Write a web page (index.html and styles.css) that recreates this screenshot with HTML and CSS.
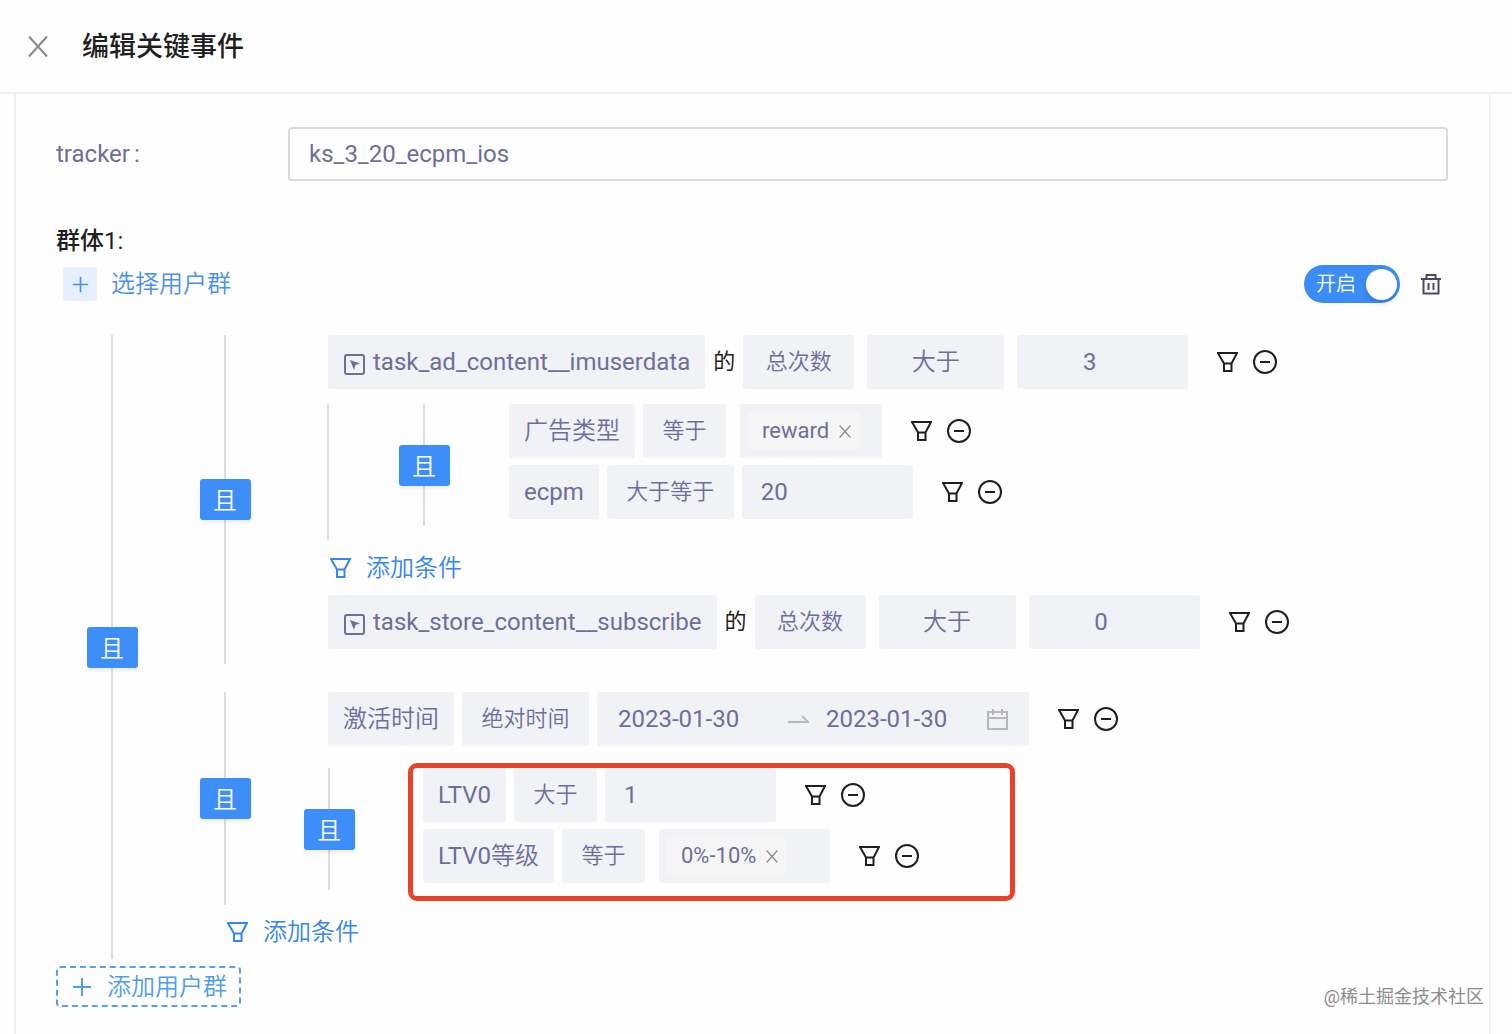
FILE: index.html
```html
<!DOCTYPE html>
<html lang="zh-CN">
<head>
<meta charset="utf-8">
<meta name="viewport" content="width=device-width, initial-scale=1">
<title>编辑关键事件</title>
<link rel="stylesheet" href="styles.css">
</head>
<body>
<svg class="sprite" aria-hidden="true">
  <symbol id="i-filter" viewBox="0 0 21 20"><path d="M1 1h19l-5.500 10.500v7.500h-7.500v-7.500zM7 11.500h7.500"/></symbol>
  <symbol id="i-minus" viewBox="0 0 24 24"><circle cx="12" cy="12" r="11"/><path d="M7 12h10"/></symbol>
  <symbol id="i-event" viewBox="0 0 21 21"><rect x="1" y="1" width="19" height="19" rx="2"/><path class="solid" d="M6 6l10 3.500-4.500 1.500-1.500 5z"/></symbol>
  <symbol id="i-close" viewBox="0 0 20 20"><path d="M1 0l18 20M19 0l-18 20"/></symbol>
  <symbol id="i-plus" viewBox="0 0 20 20"><path d="M10 1v18M1 10h18"/></symbol>
</svg>

<header class="header">
  <button class="icon-btn close" aria-label="关闭"><svg width="20" height="21"><use href="#i-close"/></svg></button>
  <h1 class="title">编辑关键事件</h1>
</header>

<main class="panel">
  <div class="field">
    <label class="field-label" for="tracker">tracker<span class="colon">:</span></label>
    <input class="field-input" id="tracker" type="text" value="ks_3_20_ecpm_ios">
  </div>

  <h2 class="group-title">群体<span class="group-index">1:</span></h2>
  <div class="group-bar">
    <button class="pick"><span class="pick-icon"><svg width="17" height="17"><use href="#i-plus"/></svg></span>选择用户群</button>
    <div class="group-tools">
      <label class="switch"><input type="checkbox" checked><span class="switch-text">开启</span><span class="knob"></span></label>
      <button class="icon-btn trash" aria-label="删除"><svg width="20" height="21" viewBox="0 0 20 21"><path d="M0 5h20M2.500 5v14.500h15v-14.500M5.500 5v-4h9v4M7.500 9v7M12.500 9v7"/></svg></button>
    </div>
  </div>

  <section class="tree">
    <div class="rail"><button class="and">且</button></div>
    <div class="branches">
      <div class="branch">
        <div class="rail"><button class="and">且</button></div>
        <div class="rules">
          <div class="rule">
            <button class="chip"><svg class="event" width="21" height="21"><use href="#i-event"/></svg>task_ad_content__imuserdata</button>
            <span class="of">的</span>
            <div class="measures">
              <select class="select metric" aria-label="指标"><option>总次数</option></select>
              <select class="select compare" aria-label="比较"><option>大于</option></select>
              <input class="number centered" aria-label="数值" value="3">
            </div>
            <div class="actions"><button class="icon-btn" aria-label="筛选"><svg width="21" height="20"><use href="#i-filter"/></svg></button><button class="icon-btn" aria-label="移除"><svg width="24" height="24"><use href="#i-minus"/></svg></button></div>
          </div>
          <div class="nested bordered">
            <div class="rail narrow"><button class="and">且</button></div>
            <div class="subrules">
              <div class="rule">
                <button class="chip cjk">广告类型</button>
                <select class="select" aria-label="比较"><option>等于</option></select>
                <div class="tags fit"><span class="tag">reward<button class="icon-btn remove" aria-label="移除 reward"><svg width="12" height="13"><use href="#i-close"/></svg></button></span></div>
                <div class="actions"><button class="icon-btn" aria-label="筛选"><svg width="21" height="20"><use href="#i-filter"/></svg></button><button class="icon-btn" aria-label="移除"><svg width="24" height="24"><use href="#i-minus"/></svg></button></div>
              </div>
              <div class="rule">
                <button class="chip">ecpm</button>
                <select class="select" aria-label="比较"><option>大于等于</option></select>
                <input class="number" aria-label="数值" value="20">
                <div class="actions"><button class="icon-btn" aria-label="筛选"><svg width="21" height="20"><use href="#i-filter"/></svg></button><button class="icon-btn" aria-label="移除"><svg width="24" height="24"><use href="#i-minus"/></svg></button></div>
              </div>
            </div>
          </div>
          <button class="add-rule inner"><svg width="21" height="20"><use href="#i-filter"/></svg>添加条件</button>
          <div class="rule">
            <button class="chip"><svg class="event" width="21" height="21"><use href="#i-event"/></svg>task_store_content__subscribe</button>
            <span class="of">的</span>
            <div class="measures">
              <select class="select metric" aria-label="指标"><option>总次数</option></select>
              <select class="select compare" aria-label="比较"><option>大于</option></select>
              <input class="number centered" aria-label="数值" value="0">
            </div>
            <div class="actions"><button class="icon-btn" aria-label="筛选"><svg width="21" height="20"><use href="#i-filter"/></svg></button><button class="icon-btn" aria-label="移除"><svg width="24" height="24"><use href="#i-minus"/></svg></button></div>
          </div>
        </div>
      </div>

      <div class="branch">
        <div class="rail"><button class="and">且</button></div>
        <div class="rules">
          <div class="rule">
            <button class="chip cjk">激活时间</button>
            <select class="select" aria-label="时间类型"><option>绝对时间</option></select>
            <div class="range">
              <input class="date" aria-label="开始日期" value="2023-01-30">
              <svg class="arrow" width="21" height="10" viewBox="0 0 21 10"><path d="M0 8h20l-6-6"/></svg>
              <input class="date" aria-label="结束日期" value="2023-01-30">
              <svg class="calendar" width="21" height="21" viewBox="0 0 21 21"><path d="M1 3h19v17h-19zM1 9h19M6 0v6M15 0v6"/></svg>
            </div>
            <div class="actions"><button class="icon-btn" aria-label="筛选"><svg width="21" height="20"><use href="#i-filter"/></svg></button><button class="icon-btn" aria-label="移除"><svg width="24" height="24"><use href="#i-minus"/></svg></button></div>
          </div>
          <div class="nested">
            <div class="rail narrow"><button class="and">且</button></div>
            <div class="subrules marked">
              <div class="rule">
                <button class="chip">LTV0</button>
                <select class="select" aria-label="比较"><option>大于</option></select>
                <input class="number" aria-label="数值" value="1">
                <div class="actions"><button class="icon-btn" aria-label="筛选"><svg width="21" height="20"><use href="#i-filter"/></svg></button><button class="icon-btn" aria-label="移除"><svg width="24" height="24"><use href="#i-minus"/></svg></button></div>
              </div>
              <div class="rule">
                <button class="chip">LTV0<span class="cjk">等级</span></button>
                <select class="select" aria-label="比较"><option>等于</option></select>
                <div class="tags"><span class="tag">0%-10%<button class="icon-btn remove" aria-label="移除 0%-10%"><svg width="12" height="13"><use href="#i-close"/></svg></button></span></div>
                <div class="actions"><button class="icon-btn" aria-label="筛选"><svg width="21" height="20"><use href="#i-filter"/></svg></button><button class="icon-btn" aria-label="移除"><svg width="24" height="24"><use href="#i-minus"/></svg></button></div>
              </div>
            </div>
          </div>
        </div>
      </div>
      <button class="add-rule outer"><svg width="21" height="20"><use href="#i-filter"/></svg>添加条件</button>
    </div>
  </section>

  <button class="add-group"><svg width="20" height="20"><use href="#i-plus"/></svg>添加用户群</button>
</main>
<div class="watermark">@稀土掘金技术社区</div>
</body>
</html>
```
FILE: styles.css
```css
*, *::after { box-sizing: border-box; }

body {
  margin: 0;
  min-height: 100vh;
  display: flex;
  flex-direction: column;
  position: relative;
  background: #fefefe;
  color: #1f1f1f;
  font: 24px/32px Roboto, "Noto Sans CJK SC", sans-serif;
}

button, input, select {
  margin: 0;
  padding: 0;
  border: 0;
  border-radius: 0;
  background: none;
  color: inherit;
  font: inherit;
  appearance: none;
}

svg {
  flex: none;
  display: block;
  fill: none;
  stroke: currentColor;
  stroke-width: 2;
}

.sprite { position: absolute; width: 0; height: 0; }
.solid { fill: currentColor; stroke: none; }
.icon-btn { display: flex; align-items: center; justify-content: center; }

.header {
  display: flex;
  align-items: center;
  gap: 34px;
  height: 94px;
  padding: 0 28px;
  border-bottom: 2px solid #f0f0f0;
}
.close { color: #888; }
.title { margin: 0; padding-top: 2px; font-size: 27px; font-weight: 500; line-height: 36px; }

.panel {
  flex: 1;
  margin: 0 21px 0 14px;
  padding: 33px 41px 27px 40px;
  border: solid #f0f0f0;
  border-width: 0 2px;
}

.field { display: flex; align-items: center; color: #6e6e9c; }
.field-label { width: 232px; }
.colon { margin-left: 4px; }
.field-input {
  flex: 1;
  min-width: 0;
  height: 54px;
  padding: 0 19px;
  border: 2px solid #dadadc;
  border-radius: 4px;
}

.group-title { margin: 44px 0 8px; font-size: 24px; font-weight: 500; }
.group-index { font-weight: 400; }
.group-bar { display: flex; align-items: center; justify-content: space-between; height: 38px; }
.pick { display: flex; align-items: center; gap: 14px; margin-left: 7px; color: #4a90f0; }
.pick-icon {
  display: grid;
  place-items: center;
  width: 34px;
  height: 34px;
  border-radius: 2px;
  background: #e6f0fd;
}
.group-tools { display: flex; align-items: center; gap: 21px; margin-right: 7px; }
.switch {
  display: flex;
  align-items: center;
  justify-content: space-between;
  width: 96px;
  height: 38px;
  padding: 0 3px 0 12px;
  border-radius: 19px;
  background: #3c8cf8;
  color: #fff;
  font-size: 20px;
}
.switch input { position: absolute; opacity: 0; }
.knob { width: 31px; height: 31px; border-radius: 50%; background: #fff; box-shadow: 0 3px 5px #00235b33; }
.trash { color: #4a4a68; }

/* Chinese labels use the lighter cut of the face */
.pick, .select, .cjk, .and, .add-rule, .add-group, .switch-text { font-weight: 350; }

.tree { display: flex; margin-top: 32px; }
.rail {
  flex: none;
  display: flex;
  align-items: center;
  justify-content: center;
  width: 112px;
  background: linear-gradient(#dcdcde, #dcdcde) center / 2px 100% no-repeat;
}
.branch .rail { width: 114px; }
.branch .narrow { width: 94px; }
.and {
  width: 51px;
  height: 41px;
  padding-top: 3px;
  border-radius: 3px;
  background: #3d8ef8;
  color: #fff;
  box-shadow: 0 3px 3px #00000010;
}
.branch { display: flex; }
.branch + .branch { margin-top: 28px; }
.rules { padding-bottom: 15px; }
.rule { display: flex; align-items: center; gap: 8px; height: 54px; }
.rules > .rule { margin-left: 46px; }

.chip, .select, .number, .tags, .range {
  height: 54px;
  border-radius: 3px;
  background: #f0f2f6;
  color: #6e6e9c;
  white-space: nowrap;
}
.chip { display: flex; align-items: center; padding: 0 15px; }
.event { margin: 4px 8px 0 1px; }
.select { padding: 0 19px; font-size: 22px; text-align: center; }
.of { width: 22px; font-size: 22px; }
.measures { display: flex; gap: 13px; }
.metric { width: 111px; }
.compare { width: 137px; padding: 0; font-size: 24px; }
.number { width: 171px; padding: 0 19px; }
.centered { padding: 0 26px 0 0; text-align: center; }
.actions { display: flex; align-items: center; gap: 15px; margin-left: 21px; }

.tags { display: flex; align-items: center; width: 171px; margin-left: 6px; padding: 0 22px 0 8px; }
.fit { width: auto; }
.tag { display: flex; align-items: center; gap: 10px; height: 38px; padding: 0 9px 0 14px; background: #f5f5f6; font-size: 22px; }
.remove { color: #888; }

.range { display: flex; align-items: center; width: 432px; padding: 0 21px; }
.date { width: 134px; }
.arrow { margin: 0 17px 0 36px; color: #b8b8bc; }
.calendar { margin-left: auto; color: #b8b8bc; }

.nested { display: flex; margin-top: 22px; }
.bordered { margin: 15px 0 0 45px; padding: 0 0 14px 48px; border-left: 2px solid #dcdcde; }
.subrules { position: relative; padding-bottom: 7px; margin-left: 47px; }
.bordered .subrules { margin-left: 38px; }
.subrules .rule + .rule { margin-top: 7px; }
.marked::after {
  content: "";
  position: absolute;
  inset: -5px auto -11px -15px;
  width: 607px;
  border: 5px solid #e8432a;
  border-radius: 9px;
  pointer-events: none;
}

.add-rule { display: flex; align-items: center; gap: 15px; height: 54px; color: #3585f2; }
.inner { height: 55px; margin-left: 48px; }
.outer { margin-left: 59px; }
.add-group {
  display: flex;
  align-items: center;
  gap: 15px;
  height: 41px;
  margin-top: 7px;
  padding: 0 12px 0 14px;
  border: 2px dashed #55a0ec;
  border-radius: 4px;
  color: #509cec;
}

.watermark {
  position: absolute;
  right: 28px;
  bottom: 21px;
  color: #8c8c8c;
  font-size: 18px;
  line-height: 32px;
}
```
